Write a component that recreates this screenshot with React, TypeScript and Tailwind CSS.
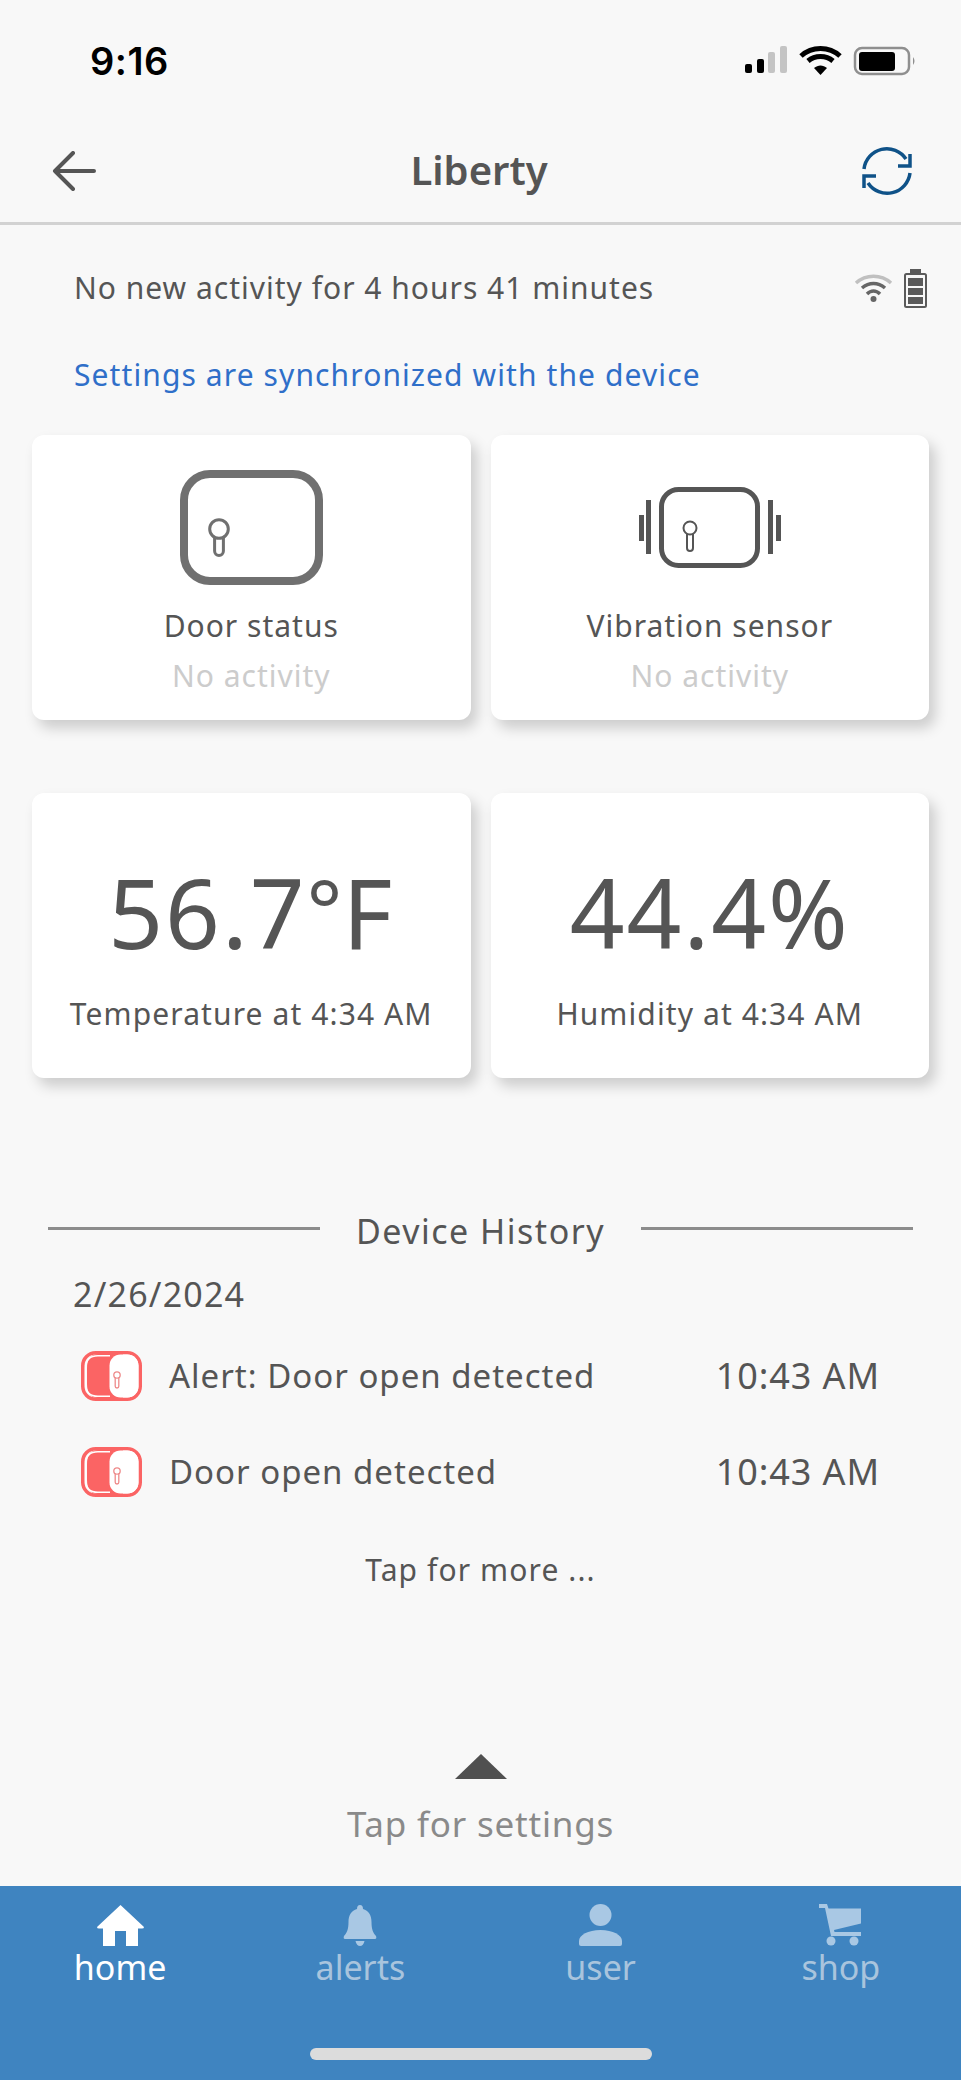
import React from 'react';

const Keyhole = ({ x, y, r, len, w, sw, color }: { x: number; y: number; r: number; len: number; w: number; sw: number; color: string }) => (
  <g fill="none" stroke={color} strokeWidth={sw}>
    <path d={`M${x - w} ${y + r - 1} V${y + len - w} a${w} ${w} 0 0 0 ${w * 2} 0 V${y + r - 1}`} />
    <circle cx={x} cy={y} r={r} />
  </g>
);

const DoorIcon = () => (
  <svg width="143" height="115" viewBox="0 0 143 115">
    <rect x="4" y="4" width="135" height="107" rx="26" fill="none" stroke="#707070" strokeWidth="8" />
    <Keyhole x={39} y={59} r={9.3} len={26.5} w={4.4} sw={3} color="#707070" />
  </svg>
);

const VibrationIcon = () => (
  <svg width="142" height="81" viewBox="0 0 142 81">
    <rect x="22.5" y="2.5" width="96" height="76" rx="17" fill="none" stroke="#555555" strokeWidth="5" />
    <rect x="0" y="28" width="5" height="26" fill="#555555" />
    <rect x="7" y="13" width="5" height="54" fill="#555555" />
    <rect x="129" y="13" width="5" height="54" fill="#555555" />
    <rect x="137" y="28" width="5" height="26" fill="#555555" />
    <Keyhole x={51} y={41} r={6.5} len={23} w={3} sw={2} color="#555555" />
  </svg>
);

const AlertDoorIcon = () => (
  <svg width="61" height="50" viewBox="0 0 61 50" className="shrink-0">
    <rect x="1.75" y="1.75" width="57.5" height="46.5" rx="13" fill="none" stroke="#fb6464" strokeWidth="3.5" />
    <path d="M42 3 H17 Q6 3 6 17 V33 Q6 47 17 47 H42 Z" fill="#fb6464" />
    <path d="M29 4.7 H17 Q4.7 4.7 4.7 17 V33 Q4.7 45.3 17 45.3 H29" fill="none" stroke="#ffffff" strokeWidth="1.6" />
    <rect x="28.5" y="3.5" width="29" height="43" rx="11" fill="#ffffff" />
    <Keyhole x={36} y={24} r={3.2} len={13} w={1.8} sw={1.3} color="#ee8a8a" />
  </svg>
);

const Card = ({ children }: { children: React.ReactNode }) => (
  <div className="h-[285px] rounded-[12px] bg-white shadow-[6px_8px_14px_rgba(0,0,0,0.18)] flex flex-col items-center">
    {children}
  </div>
);

const StatusCard = ({ icon, label }: { icon: React.ReactNode; label: string }) => (
  <Card>
    <div className="h-[115px] mt-[35px] flex items-center justify-center">{icon}</div>
    <div className="mt-[19px] text-[30px] leading-[44px] tracking-[1px] text-[#555555]">{label}</div>
    <div className="mt-[6px] text-[30px] leading-[44px] tracking-[1px] text-[#cccccc]">No activity</div>
  </Card>
);

const ReadingCard = ({ value, label }: { value: React.ReactNode; label: string }) => (
  <Card>
    <div className="mt-[54px] h-[130px] text-[96px] leading-[130px] tracking-[2px] text-[#555555]">{value}</div>
    <div className="mt-[15px] text-[30px] leading-[44px] tracking-[1.1px] text-[#555555]">{label}</div>
  </Card>
);

const HistoryRow = ({ label }: { label: string }) => (
  <div className="h-[96px] pl-[81px] pr-[81px] flex items-center">
    <AlertDoorIcon />
    <span className="ml-[27px] flex-1 text-[33px] tracking-[1px] text-[#555555]">{label}</span>
    <span className="text-[36px] tracking-[0.9px] text-[#555555]">10:43 AM</span>
  </div>
);

const TabItem = ({ label, active, icon }: { label: string; active?: boolean; icon: React.ReactNode }) => (
  <div className="flex flex-col items-center">
    <div className="h-[42px] flex items-end justify-center">{icon}</div>
    <div className={`-mt-[1px] text-[34px] leading-[44px] ${active ? 'text-white' : 'text-[#a9c4dd]'}`}>{label}</div>
  </div>
);

export default function App() {
  return (
    <div className="w-[961px] h-[2080px] bg-[#f8f8f8] flex flex-col overflow-hidden font-['Noto_Sans',sans-serif]">
      {/* status bar */}
      <div className="h-[122px] pl-[90px] pr-[45px] flex items-center justify-between">
        <span className="text-[38px] font-semibold tracking-[0.5px] text-black font-['Inter',sans-serif]">9:16</span>
        <svg width="171" height="30" viewBox="0 0 171 30">
          <rect x="0" y="18" width="7" height="9" rx="2" />
          <rect x="12" y="13" width="7" height="14" rx="2" />
          <rect x="23" y="6" width="7" height="21" rx="2" fill="#c4c4c4" />
          <rect x="35" y="0" width="7" height="27" rx="2" fill="#c4c4c4" />
          <path d="M56 9 C67 -1 84 -1 95 9" transform="translate(0 1)" fill="none" stroke="#000" strokeWidth="5" />
          <path d="M63 15 C70 9 81 9 88 15" fill="none" stroke="#000" strokeWidth="5" />
          <path d="M75.5 29 L69 22 C73 18.5 78 18.5 82 22 Z" />
          <rect x="110" y="2" width="54" height="26" rx="7" fill="none" stroke="#8f8f8f" strokeWidth="2.5" />
          <rect x="114" y="6" width="36" height="19" rx="3" />
          <path d="M168 11 Q171 15 168 19 Z" fill="#8f8f8f" />
        </svg>
      </div>

      {/* header */}
      <div className="h-[103px] pl-[52px] pr-[49px] border-b-[3px] border-[#d2d2d2] flex items-center justify-between">
        <svg width="44" height="40" viewBox="0 0 44 40" fill="none" stroke="#555555" strokeWidth="4" strokeLinecap="round" strokeLinejoin="round" className="-mt-[2px]">
          <path d="M42 20 H3 M21 2 L3 20 L21 38" />
        </svg>
        <span className="text-[40px] leading-[50px] -mt-[5px] font-semibold text-[#555555]">Liberty</span>
        <svg width="50" height="50" viewBox="0 0 50 50" fill="none" stroke="#0f5288" strokeWidth="3.5" className="-mt-[2px]">
          <path d="M2 23 A23 23 0 0 1 44 13" />
          <path d="M48 27 A23 23 0 0 1 6 37" />
          <path d="M48 8 V20 H36" strokeLinejoin="miter" />
          <path d="M2 42 V30 H14" strokeLinejoin="miter" />
        </svg>
      </div>

      {/* device info */}
      <div className="h-[126px] pl-[74px] pr-[34px] flex items-center justify-between">
        <span className="text-[30px] tracking-[1px] -mt-[2px] text-[#555555]">No new activity for 4 hours 41 minutes</span>
        <div className="flex items-center gap-[11px]">
          <svg width="39" height="28" viewBox="0 0 39 28" fill="none" strokeWidth="3.5">
            <path d="M2 9 C12 0 27 0 37 9" stroke="#c0c0c0" />
            <path d="M8 14 C15 8 24 8 31 14" stroke="#666666" />
            <path d="M13 20 C17 16 22 16 26 20" stroke="#666666" />
            <circle cx="19.5" cy="25" r="3" fill="#666666" stroke="none" />
          </svg>
          <svg width="23" height="39" viewBox="0 0 23 39">
            <rect x="6" y="0" width="11" height="5" fill="#5a5a5a" />
            <rect x="1" y="5" width="21" height="33" rx="1.5" fill="none" stroke="#5a5a5a" strokeWidth="2" />
            <rect x="4" y="9" width="15" height="8" fill="#5a5a5a" />
            <rect x="4" y="19" width="15" height="7" fill="#5a5a5a" />
            <rect x="4" y="28" width="15" height="7" fill="#5a5a5a" />
          </svg>
        </div>
      </div>
      <div className="pl-[74px] text-[30px] leading-[48px] tracking-[1.1px] text-[#2f6fc9]">Settings are synchronized with the device</div>

      {/* cards */}
      <div className="mt-[36px] px-[32px] grid grid-cols-2 gap-x-[20px] gap-y-[73px]">
        <StatusCard icon={<DoorIcon />} label="Door status" />
        <StatusCard icon={<VibrationIcon />} label="Vibration sensor" />
        <ReadingCard value={<>56.7<span className="text-[84px] leading-none tracking-normal align-[8px]">°</span>F</>} label="Temperature at 4:34 AM" />
        <ReadingCard value="44.4%" label="Humidity at 4:34 AM" />
      </div>

      {/* history */}
      <div className="mt-[128px] pl-[48px] pr-[48px] flex items-center h-[50px]">
        <div className="flex-1 h-[3px] bg-[#8c8c8c] -mt-[6px]" />
        <span className="mx-[36px] text-[34px] leading-[50px] tracking-[1.5px] text-[#555555]">Device History</span>
        <div className="flex-1 h-[3px] bg-[#8c8c8c] -mt-[6px]" />
      </div>
      <div className="mt-[16px] pl-[73px] text-[34px] leading-[44px] tracking-[1.2px] text-[#555555]">2/26/2024</div>
      <div className="mt-[12px]">
        <HistoryRow label="Alert: Door open detected" />
        <HistoryRow label="Door open detected" />
      </div>
      <div className="mt-[28px] text-center text-[30px] leading-[44px] tracking-[1.1px] text-[#555555]">Tap for more ...</div>

      {/* settings toggle */}
      <div className="mt-[162px] flex flex-col items-center">
        <svg width="52" height="25" viewBox="0 0 52 25">
          <path d="M26 0 L52 25 H0 Z" fill="#505050" />
        </svg>
        <div className="mt-[21px] text-[35px] leading-[48px] tracking-[0.8px] text-[#8a8a8a]">Tap for settings</div>
      </div>

      {/* tab bar */}
      <div className="mt-auto h-[194px] bg-[#3f84c0] flex flex-col">
        <div className="grid grid-cols-4 pt-[18px]">
          <TabItem
            active
            label="home"
            icon={
              <svg width="47" height="41" viewBox="0 0 47 41" fill="#ffffff">
                <path d="M23.5 0 L47 22 Q47 23.5 45 23.5 H41 V41 H29 V26 H18 V41 H6 V23.5 H2 Q0 23.5 0 22 Z" />
              </svg>
            }
          />
          <TabItem
            label="alerts"
            icon={
              <svg width="34" height="41" viewBox="0 0 34 41" fill="#a9c8e4">
                <path d="M17 0 C19 0 20 1.5 20 4 C25.5 5.5 28.5 10 28.5 17 C28.5 24 30 28 33 31 Q34 34 32 34 H2 Q0 34 1 31 C4 28 5.5 24 5.5 17 C5.5 10 8.5 5.5 14 4 C14 1.5 15 0 17 0 Z" />
                <path d="M12.5 36 H21.5 C21 39 19 41 17 41 C15 41 13 39 12.5 36 Z" />
              </svg>
            }
          />
          <TabItem
            label="user"
            icon={
              <svg width="43" height="42" viewBox="0 0 43 42" fill="#a9c8e4">
                <circle cx="21.5" cy="11" r="11" />
                <path d="M0 40 V37 C0 31 9 26 21.5 26 C34 26 43 31 43 37 V40 Q43 42 41 42 H2 Q0 42 0 40 Z" />
              </svg>
            }
          />
          <TabItem
            label="shop"
            icon={
              <svg width="43" height="42" viewBox="0 0 43 42" fill="#a9c8e4">
                <path d="M0 0 H8 L9.5 4.5 H42 V19.5 L15 26 L15.5 28 H42 V32 H12 L6 4 H0 Z" />
                <circle cx="12" cy="37" r="4.5" />
                <circle cx="35" cy="37" r="4.5" />
              </svg>
            }
          />
        </div>
        <div className="mt-auto mb-[20px] mx-auto w-[342px] h-[12px] rounded-[6px] bg-[#dcdcdc]" />
      </div>
    </div>
  );
}
